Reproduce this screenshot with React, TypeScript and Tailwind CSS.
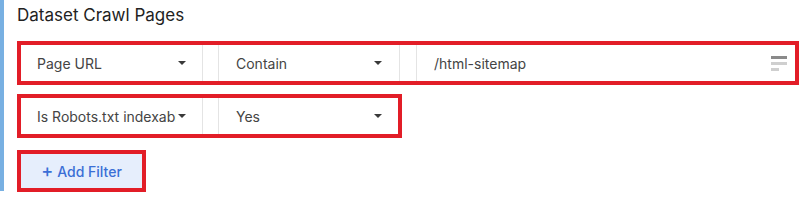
const Caret = () => (
  <svg width="8" height="4" viewBox="0 0 8 4" className="shrink-0">
    <path d="M0 0h8L4 4z" fill="#3a3a3a" />
  </svg>
);

function Select({ value, width, first = false }: { value: string; width: string; first?: boolean }) {
  return (
    <div
      className={`flex h-full items-center justify-between gap-[2px] border-[#e4e4e4] ${
        first ? "border-r pl-4 pr-4" : "border-x pl-[17px] pr-[17px]"
      } ${width}`}
    >
      <span className="overflow-hidden whitespace-nowrap text-[14px] text-[#444]">{value}</span>
      <Caret />
    </div>
  );
}

function FilterIcon() {
  return (
    <div className="flex w-4 flex-col gap-[3px]">
      <div className="h-[3px] w-4 bg-[#8a8a8a]" />
      <div className="h-[3px] w-4 bg-[#cfcfcf]" />
      <div className="h-[3px] w-2 bg-[#cfcfcf]" />
    </div>
  );
}

export default function App() {
  return (
    <div className="h-[200px] w-[803px] bg-white font-['Inter',sans-serif]">
      <div className="flex h-[191px] flex-col border-l-4 border-[#78b0e2] pl-[13px] pt-[3px]">
        <h2 className="text-[17px] font-normal leading-[24px] text-[#222]">Dataset Crawl Pages</h2>

        {/* row 1 */}
        <div className="mt-[14px] flex h-[44px] w-[782px] shrink-0 border-4 border-[#e21d27] bg-white">
          <Select value="Page URL" width="w-[182px]" first />
          <div className="w-[15px]" />
          <Select value="Contain" width="w-[182px]" />
          <div className="w-[16px]" />
          <div className="flex h-full flex-1 items-center justify-between border-l border-[#e4e4e4] pl-[17px] pr-2">
            <span className="text-[14px] text-[#444]">/html-sitemap</span>
            <FilterIcon />
          </div>
        </div>

        {/* row 2 */}
        <div className="mt-[9px] flex h-[44px] w-[385px] shrink-0 border-4 border-[#e21d27] bg-white">
          <Select value="Is Robots.txt indexable" width="w-[182px]" first />
          <div className="w-[15px]" />
          <div className="flex h-full flex-1 items-center justify-between border-l border-[#e4e4e4] pl-[17px] pr-4">
            <span className="text-[14px] text-[#444]">Yes</span>
            <Caret />
          </div>
        </div>

        <div className="mt-[12px] w-[129px] shrink-0 border-4 border-[#e21d27]">
          <button className="flex h-[34px] w-full items-center justify-center gap-1 bg-[#e6eefc] text-[14px] font-medium text-[#3b6fd6]">
            <span className="text-[18px] leading-none">+</span>
            <span>Add Filter</span>
          </button>
        </div>
      </div>
    </div>
  );
}
